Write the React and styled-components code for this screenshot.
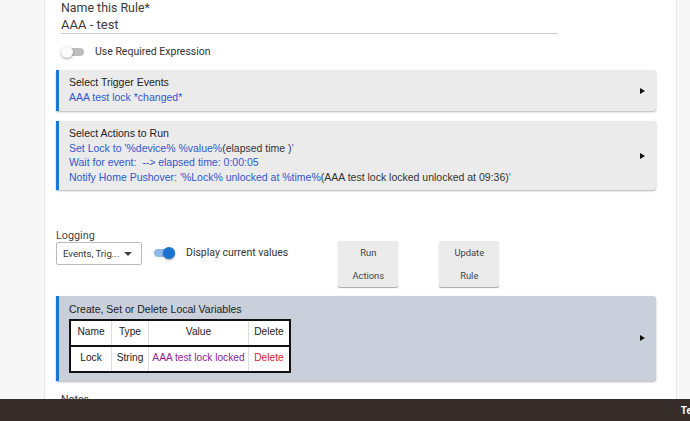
import React from 'react'
import styled, { createGlobalStyle } from 'styled-components'

const Global = createGlobalStyle`
  html, body { margin: 0; padding: 0; background: #fff; }
  body { font-family: Roboto, "Liberation Sans", sans-serif; }
`

const Page = styled.div`
  position: relative;
  width: 690px;
  height: 421px;
  overflow: hidden;
  display: flex;
  background: #fff;
`

const SideStrip = styled.div`
  width: ${p => p.w}px;
  flex: none;
  background: #f7f7f7;
  border-${p => p.side}: 1px solid #e6e6e6;
`

const Main = styled.div`
  flex: 1;
  padding: 0 20px 0 11px;
  display: flex;
  flex-direction: column;
`

const Field = styled.div`
  margin-left: 5px;
  width: 497px;
  color: #3a3a3a;
`

const FieldLabel = styled.div`
  font-size: 12.4px;
  line-height: 15px;
`

const FieldValue = styled.div`
  font-size: 13px;
  line-height: 17px;
  padding-top: 1px;
  border-bottom: 1px solid #c8c8c8;
`

const ToggleRow = styled.div`
  display: flex;
  align-items: center;
  margin: ${p => p.m};
  font-size: 10.5px;
  line-height: 12px;
  color: #333;
`

const Toggle = styled.span`
  position: relative;
  width: 23px;
  height: 12px;
  margin-right: 11px;
  flex: none;
  &::before {
    content: '';
    position: absolute;
    left: 2px;
    right: 0;
    top: 2px;
    height: 8px;
    border-radius: 4px;
    background: ${p => (p.on ? '#8db8ea' : '#bdbdbd')};
  }
  &::after {
    content: '';
    position: absolute;
    top: 0;
    left: ${p => (p.on ? '11px' : '0')};
    width: 12px;
    height: 12px;
    border-radius: 50%;
    background: ${p => (p.on ? '#1b74d2' : '#fafafa')};
    box-shadow: 0 1px 2px rgba(0, 0, 0, 0.4);
  }
`

const Card = styled.div`
  position: relative;
  margin-top: ${p => p.mt}px;
  min-height: ${p => p.h}px;
  box-sizing: border-box;
  padding: ${p => p.pad || '5px 30px 5px 10px'};
  background: ${p => p.bg || '#ebebeb'};
  border-left: 3px solid #1d75d8;
  border-radius: 0 3px 3px 0;
  box-shadow: 0 1px 2px rgba(0, 0, 0, 0.3);
  font-family: "Liberation Sans", Arial, sans-serif;
  font-size: 10.5px;
  line-height: 14.5px;
  color: #222;
`

const Arrow = styled.span`
  position: absolute;
  right: 11px;
  top: 50%;
  margin-top: -3px;
  width: 0;
  height: 0;
  border-left: 5px solid #111;
  border-top: 3.5px solid transparent;
  border-bottom: 3.5px solid transparent;
`

const Blue = styled.div`
  color: #3158cf;
  span { color: #333; }
`

const Controls = styled.div`
  margin-top: 40px;
  display: flex;
  align-items: flex-start;
`

const LogBlock = styled.div`
  display: flex;
  flex-direction: column;
`

const SmallLabel = styled.div`
  font-size: 10.8px;
  color: #444;
  line-height: 12px;
`

const SelectBox = styled.div`
  display: flex;
  align-items: center;
  justify-content: space-between;
  width: 86px;
  height: 23px;
  box-sizing: border-box;
  padding: 0 9px 0 6px;
  border: 1px solid #bbb;
  border-radius: 2px;
  font-size: 9.6px;
  color: #333;
  &::after {
    content: '';
    border-top: 4px solid #444;
    border-left: 4px solid transparent;
    border-right: 4px solid transparent;
  }
`

const Button = styled.div`
  width: 60px;
  height: 46px;
  margin-left: ${p => p.ml}px;
  margin-top: 11px;
  background: #ebebeb;
  border-radius: 2px;
  box-shadow: 0 1px 1px rgba(0, 0, 0, 0.35);
  font-size: 9.4px;
  color: #444;
  text-align: center;
  line-height: 23px;
`

const Table = styled.table`
  margin-top: 2px;
  border-collapse: collapse;
  table-layout: fixed;
  background: #fff;
  border: 2px solid #111;
  font-size: 10.2px;
  color: #222;
  thead tr { border-bottom: 2px solid #111; }
`

const Cell = styled.td`
  width: ${p => p.w}px;
  height: 24px;
  padding: 0;
  font-weight: normal;
  text-align: center;
  white-space: nowrap;
  border-left: ${p => (p.first ? '0' : '1px solid #ddd')};
  color: ${p => p.color || 'inherit'};
`

const Notes = styled.div`
  margin: 12px 0 0 5px;
  font-size: 10.5px;
  color: #333;
`

const Footer = styled.div`
  position: absolute;
  left: 0;
  right: 0;
  bottom: 0;
  height: 22px;
  background: #372d2a;
  color: #fff;
  font-size: 10px;
  font-weight: bold;
  display: flex;
  align-items: center;
  justify-content: flex-end;
  white-space: nowrap;
  overflow: hidden;
  span { margin-right: -2px; }
`

const widths = [40, 36, 99, 40]

export default function App () {
  return (
    <Page>
      <Global />
      <SideStrip w={44} side='right' />
      <Main>
        <Field>
          <FieldLabel>Name this Rule*</FieldLabel>
          <FieldValue>AAA - test</FieldValue>
        </Field>
        <ToggleRow m='12px 0 0 5px'>
          <Toggle />
          Use Required Expression
        </ToggleRow>
        <Card mt={12} h={41}>
          <div>Select Trigger Events</div>
          <Blue>AAA test lock *changed*</Blue>
          <Arrow />
        </Card>
        <Card mt={10} h={69}>
          <div>Select Actions to Run</div>
          <Blue>Set Lock to '%device% %value%<span>(elapsed time )</span>'</Blue>
          <Blue>Wait for event:&nbsp; --&gt; elapsed time: 0:00:05</Blue>
          <Blue>Notify Home Pushover: '%Lock% unlocked at %time%<span>(AAA test lock locked unlocked at 09:36)</span>'</Blue>
          <Arrow />
        </Card>
        <Controls>
          <LogBlock>
            <SmallLabel>Logging</SmallLabel>
            <SelectBox>Events, Trig...</SelectBox>
          </LogBlock>
          <ToggleRow m='17px 0 0 10px'>
            <Toggle on />
            Display current values
          </ToggleRow>
          <Button ml={50}>Run<br />Actions</Button>
          <Button ml={41}>Update<br />Rule</Button>
        </Controls>
        <Card mt={9} h={82} bg='#c9cfdb' pad='6px 30px 8px 10px'>
          <div>Create, Set or Delete Local Variables</div>
          <Table>
            <thead>
              <tr>
                {['Name', 'Type', 'Value', 'Delete'].map((h, i) =>
                  <Cell as='th' key={h} w={widths[i]} first={i === 0}>{h}</Cell>
                )}
              </tr>
            </thead>
            <tbody>
              <tr>
                <Cell w={widths[0]} first>Lock</Cell>
                <Cell w={widths[1]}>String</Cell>
                <Cell w={widths[2]} color='#8a1e96'>AAA test lock locked</Cell>
                <Cell w={widths[3]} color='#e8202f'>Delete</Cell>
              </tr>
            </tbody>
          </Table>
          <Arrow />
        </Card>
        <Notes>Notes</Notes>
      </Main>
      <SideStrip w={13} side='left' />
      <Footer><span>Te</span></Footer>
    </Page>
  )
}
